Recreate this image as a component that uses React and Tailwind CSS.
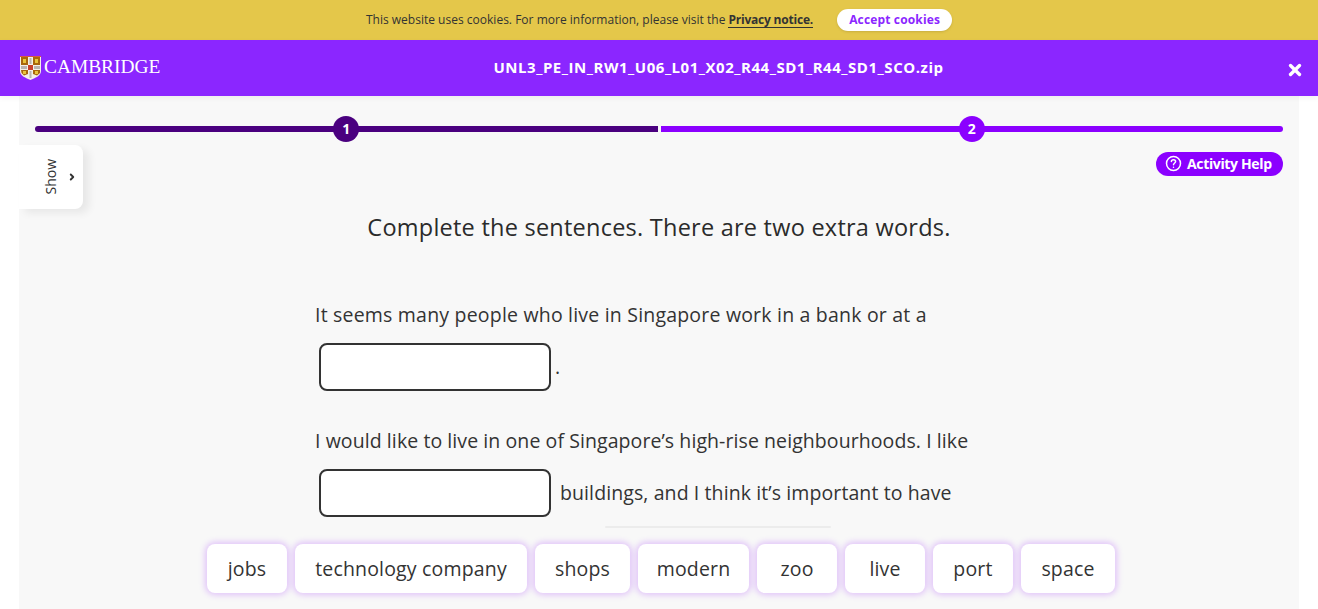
import React from "react";
import { X, ChevronRight } from "lucide-react";

const tiles = [
  { label: "jobs", width: "w-[80px]" },
  { label: "technology company", width: "w-[232px]" },
  { label: "shops", width: "w-[95px]" },
  { label: "modern", width: "w-[111px]" },
  { label: "zoo", width: "w-[80px]" },
  { label: "live", width: "w-[80px]" },
  { label: "port", width: "w-[80px]" },
  { label: "space", width: "w-[94px]" },
];

const Shield = () => (
  <svg width="21" height="24" viewBox="0 0 21 24" className="shrink-0">
    <path d="M0 0H21V15C21 20 15 22 10.5 24C6 22 0 20 0 15Z" fill="#f4efe8" />
    <path d="M1 1H8V9H1Z" fill="#a8660c" />
    <path d="M13 1H20V9H13Z" fill="#a8660c" />
    <path d="M1 14H8V18L4 19.5L1.5 17Z" fill="#a8660c" />
    <path d="M13 14H20V17L17 19.5L13 18Z" fill="#a8660c" />
    <path d="M8 9H13V14H8Z" fill="#c8402a" />
    <path d="M0 0H21V1H0Z" fill="#d9593f" />
    <path d="M3 3H6V7H3Z" fill="#e8c43c" />
    <path d="M15 3H18V7H15Z" fill="#e8c43c" />
    <path d="M3 15H6V18H3Z" fill="#e8c43c" />
    <path d="M15 15H18V18H15Z" fill="#e8c43c" />
    <path d="M1 10H7V13H1Z" fill="#b9b4b0" />
    <path d="M14 10H20V13H14Z" fill="#b9b4b0" />
    <path d="M9.5 2H11.5V8H9.5Z" fill="#b9b4b0" />
    <path d="M9.5 15H11.5V22H9.5Z" fill="#b9b4b0" />
  </svg>
);

const Blank = () => (
  <div className="ml-1 h-12 w-[232px] shrink-0 rounded-lg border-2 border-[#333333] bg-white" />
);

const App = () => {
  return (
    <div className="relative flex h-[609px] flex-col overflow-hidden bg-white font-['Open_Sans',sans-serif] text-[#333333]">
      {/* Cookie bar */}
      <div className="flex h-10 shrink-0 items-center justify-center bg-[#e4c74a]">
        <span className="text-[12px] tracking-[0.01px]">
          This website uses cookies. For more information, please visit the
        </span>
        <a className="ml-[3px] border-b border-[#333333] text-[12px] leading-[15px] font-bold tracking-[-0.2px]">
          Privacy notice.
        </a>
        <button className="ml-6 h-[22px] w-[115px] rounded-full bg-white text-[12px] font-bold tracking-[0.15px] text-[#8b26ff] shadow-sm">
          Accept cookies
        </button>
      </div>

      {/* Header */}
      <header className="relative z-10 flex h-14 shrink-0 items-center bg-[#8b26ff] pl-5 text-white shadow-[0_2px_6px_rgba(0,0,0,0.05)]">
        <div className="flex items-center gap-[3px]">
          <Shield />
          <span className="pb-[2px] font-['Liberation_Serif',serif] text-[19.4px] leading-none">
            CAMBRIDGE
          </span>
        </div>
        <div className="absolute left-[119px] right-0 top-[18px] text-center text-[15px] leading-[18px] font-bold tracking-[0.54px]">
          UNL3_PE_IN_RW1_U06_L01_X02_R44_SD1_R44_SD1_SCO.zip
        </div>
        <X className="absolute right-[14px] top-[21px] h-[18px] w-[18px]" strokeWidth={4.5} />
      </header>

      {/* Activity panel */}
      <main className="relative mx-[19px] flex-1 bg-[#f8f8f8] px-4">
        {/* Progress steps */}
        <div className="flex gap-[3px] pt-5">
          <div className="relative flex h-[26px] flex-1 items-center justify-center">
            <div className="h-1.5 w-full rounded-l-full bg-[#4a007f]" />
            <span className="absolute flex h-[26px] w-[26px] items-center justify-center rounded-full bg-[#4a007f] pb-[1px] text-[14px] font-bold text-white">
              1
            </span>
          </div>
          <div className="relative flex h-[26px] flex-1 items-center justify-center">
            <div className="h-1.5 w-full rounded-r-full bg-[#8b00ff]" />
            <span className="absolute flex h-[26px] w-[26px] items-center justify-center rounded-full bg-[#8b00ff] pb-[1px] text-[14px] font-bold text-white">
              2
            </span>
          </div>
        </div>

        <div className="mt-2.5 flex justify-end">
          <button className="flex h-6 w-[127px] items-center gap-[5px] rounded-full bg-[#8b00ff] pb-[1px] pl-[9px] text-[14px] font-bold tracking-[-0.35px] text-white">
            <svg width="17" height="17" viewBox="0 0 17 17" fill="none" stroke="currentColor" strokeWidth="1.5" strokeLinecap="round">
              <circle cx="8.5" cy="8.5" r="7" />
              <path d="M6.4 6.6C6.4 5.4 7.4 4.7 8.5 4.7C9.7 4.7 10.6 5.5 10.6 6.5C10.6 8 8.5 8 8.5 9.8" />
              <path d="M8.5 12.2V12.3" />
            </svg>
            Activity Help
          </button>
        </div>

        <h1 className="mt-[34px] text-center text-[23.5px] leading-[34px] tracking-[0.24px] text-[#2b2b2b]">
          Complete the sentences. There are two extra words.
        </h1>

        {/* Sentences */}
        <div className="mx-auto mt-[57px] w-[688px] text-[19.5px]">
          <p className="leading-7 tracking-[0.2px]">
            It seems many people who live in Singapore work in a bank or at a
          </p>
          <div className="mt-3.5 flex items-center gap-[4px]">
            <Blank />
            <span className="leading-7">.</span>
          </div>
          <p className="mt-[36px] leading-7 tracking-[0.08px]">
            I would like to live in one of Singapore’s high-rise neighbourhoods. I like
          </p>
          <div className="mt-3.5 flex items-center gap-[9px]">
            <Blank />
            <span className="leading-7 tracking-[0.1px]">buildings, and I think it’s important to have</span>
          </div>
        </div>

        {/* Show tab */}
        <div className="absolute left-0 top-[49px] flex h-16 w-16 items-center justify-center gap-1.5 rounded-r-lg bg-white pl-4 shadow-[6px_4px_8px_rgba(0,0,0,0.07)]">
          <span className="rotate-180 text-[14px] leading-5 [writing-mode:vertical-rl]">Show</span>
          <ChevronRight className="h-2.5 w-2.5 shrink-0" strokeWidth={4.5} />
        </div>

        {/* Word bank */}
        <div className="absolute bottom-0 left-0 right-0 flex h-[89px] flex-col items-center bg-[#f8f8f8]">
          <div className="ml-[117px] mt-1.5 h-[2px] w-[226px] rounded-full bg-[#ececec]" />
          <div className="mt-4 flex gap-2 pl-1">
            {tiles.map((tile) => (
              <div
                key={tile.label}
                className={`flex h-[49px] items-center justify-center rounded-lg bg-white text-[19.5px] tracking-[0.17px] shadow-[0_0_6px_2px_rgba(139,0,255,0.22)] ${tile.width}`}
              >
                {tile.label}
              </div>
            ))}
          </div>
        </div>
      </main>
    </div>
  );
};

export default App;
